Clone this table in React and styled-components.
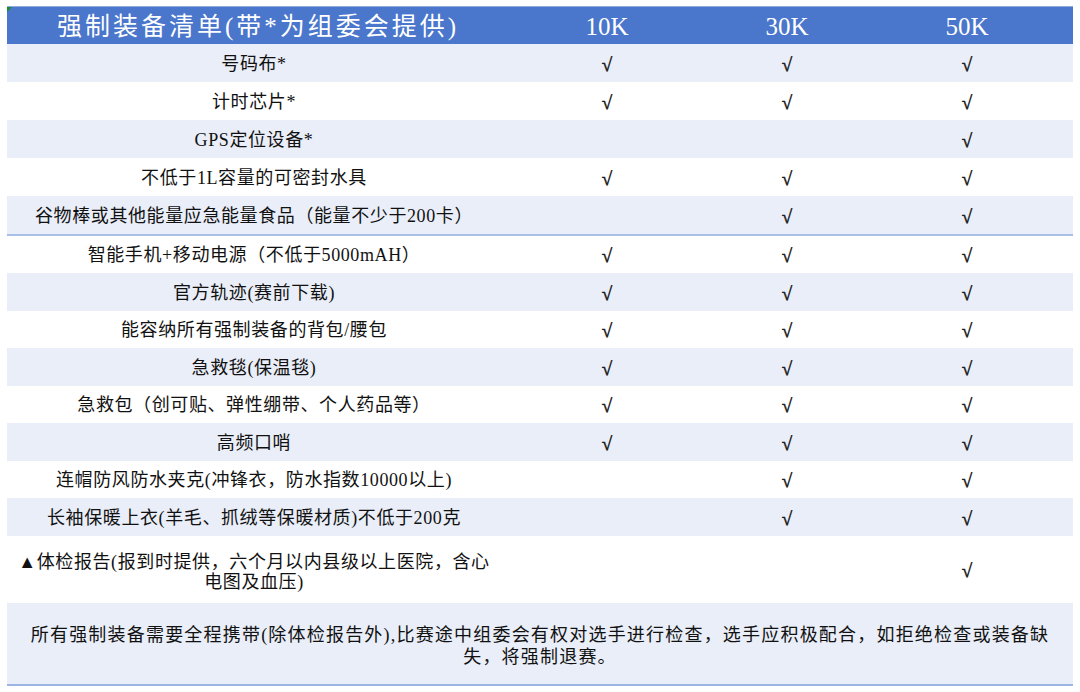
import React from "react";
import styled, { createGlobalStyle } from "styled-components";

const Global = createGlobalStyle`
  html, body { margin: 0; padding: 0; background: #ffffff; }
  body { font-family: "Liberation Serif", "Noto Sans CJK SC", serif; color: #111; }
`;

const Page = styled.div`
  width: 1080px;
  height: 692px;
  padding: 6px 7px 0 7px;
  box-sizing: border-box;
`;

const Table = styled.div`
  position: relative;
  width: 1066px;
  display: flex;
  flex-direction: column;
  border-top: 1px solid #8eaadc;
`;

const Corner = styled.div`
  position: absolute;
  left: 0;
  top: 0;
  width: 0;
  height: 0;
  border-top: 5px solid #1f8a2e;
  border-right: 5px solid transparent;
`;

const Row = styled.div`
  display: grid;
  grid-template-columns: 494px 212px 148px 212px;
  align-items: center;
  height: ${(p) => p.$h || 37.6}px;
  background: ${(p) => (p.$shade ? "#e9eef8" : "#ffffff")};
  border-bottom: ${(p) => (p.$divider ? "2px solid #a8bfe6" : "none")};
  box-sizing: border-box;
`;

const HeaderRow = styled(Row)`
  height: 37px;
  background: #4a76cb;
  color: #ffffff;
`;

const HeadCell = styled.div`
  text-align: center;
  font-size: 25px;
  letter-spacing: ${(p) => (p.$wide ? "3px" : "0")};
  line-height: 1;
  padding-top: 1px;
  padding-left: ${(p) => (p.$wide ? "8px" : "0")};
`;

const ItemCell = styled.div`
  text-align: center;
  font-size: 18px;
  letter-spacing: 0.6px;
  line-height: 20px;
  padding-top: ${(p) => (p.$tall ? "5px" : "2px")};
`;

const Line = styled.div`
  width: 100%;
  text-align: center;
  white-space: nowrap;
`;

const CheckCell = styled.div`
  display: flex;
  justify-content: center;
  align-items: center;
  padding-top: 4px;
`;

const Check = styled.span`
  display: inline-block;
  font-family: "Liberation Serif", serif;
  font-size: 19px;
  line-height: 18px;
  color: #141414;
  -webkit-text-stroke: 0.45px #141414;
`;

const Footer = styled.div`
  height: 75px;
  padding-top: 6px;
  background: #e9eef8;
  border-bottom: 2px solid #9cb5e2;
  display: flex;
  flex-direction: column;
  align-items: center;
  justify-content: center;
  font-size: 18px;
  letter-spacing: 1.2px;
  line-height: 22px;
  white-space: nowrap;
`;

const rows = [
  ["号码布*", 1, 1, 1],
  ["计时芯片*", 1, 1, 1],
  ["GPS定位设备*", 0, 0, 1],
  ["不低于1L容量的可密封水具", 1, 1, 1],
  ["谷物棒或其他能量应急能量食品（能量不少于200卡）", 0, 1, 1],
  ["智能手机+移动电源（不低于5000mAH）", 1, 1, 1],
  ["官方轨迹(赛前下载)", 1, 1, 1],
  ["能容纳所有强制装备的背包/腰包", 1, 1, 1],
  ["急救毯(保温毯)", 1, 1, 1],
  ["急救包（创可贴、弹性绷带、个人药品等）", 1, 1, 1],
  ["高频口哨", 1, 1, 1],
  ["连帽防风防水夹克(冲锋衣，防水指数10000以上)", 0, 1, 1],
  ["长袖保暖上衣(羊毛、抓绒等保暖材质)不低于200克", 0, 1, 1],
];

export default function App() {
  return (
    <>
      <Global />
      <Page>
        <Table>
          <Corner />
          <HeaderRow>
            <HeadCell $wide>强制装备清单(带*为组委会提供)</HeadCell>
            <HeadCell>10K</HeadCell>
            <HeadCell>30K</HeadCell>
            <HeadCell>50K</HeadCell>
          </HeaderRow>
          {rows.map(([name, a, b, c], i) => (
            <Row
              key={name}
              $shade={i % 2 === 0}
              $divider={i === 4}
              $h={i < 4 ? 38 : i === 4 ? 39.5 : 37.5}
            >
              <ItemCell>{name}</ItemCell>
              <CheckCell>{a ? <Check>√</Check> : null}</CheckCell>
              <CheckCell>{b ? <Check>√</Check> : null}</CheckCell>
              <CheckCell>{c ? <Check>√</Check> : null}</CheckCell>
            </Row>
          ))}
          <Row $h={67}>
            <ItemCell $tall>
              <Line>▲体检报告(报到时提供，六个月以内县级以上医院，含心</Line>
              <Line>电图及血压)</Line>
            </ItemCell>
            <CheckCell />
            <CheckCell />
            <CheckCell>
              <Check>√</Check>
            </CheckCell>
          </Row>
          <Footer>
            <Line>
              所有强制装备需要全程携带(除体检报告外),比赛途中组委会有权对选手进行检查，选手应积极配合，如拒绝检查或装备缺
            </Line>
            <Line>失，将强制退赛。</Line>
          </Footer>
        </Table>
      </Page>
    </>
  );
}
